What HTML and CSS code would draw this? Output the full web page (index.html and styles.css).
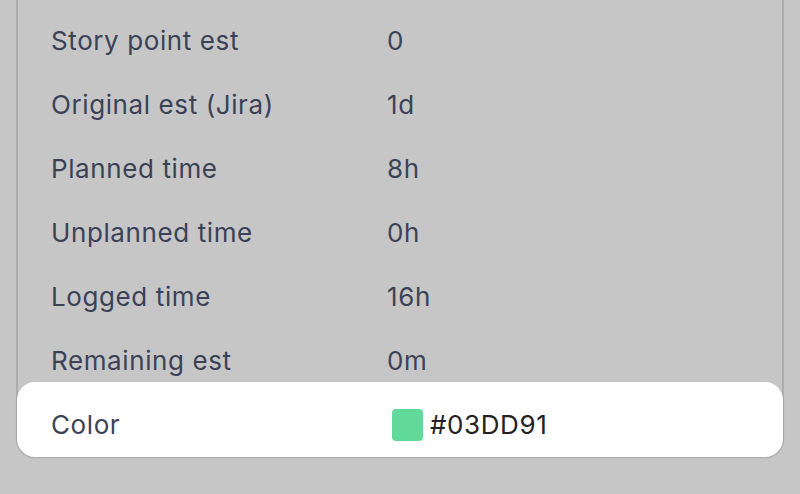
FILE: index.html
```html
<!DOCTYPE html>
<html lang="en">
<head>
    <meta charset="UTF-8">
    <meta name="viewport" content="width=device-width, initial-scale=1.0">
    <title>Issue details</title>
    <link rel="stylesheet" href="styles.css">
</head>
<body>
    <div class="details-panel">
        <div class="detail-row">
            <span class="detail-label">Story point est</span>
            <span class="detail-value">0</span>
        </div>
        <div class="detail-row">
            <span class="detail-label">Original est (Jira)</span>
            <span class="detail-value">1d</span>
        </div>
        <div class="detail-row">
            <span class="detail-label">Planned time</span>
            <span class="detail-value">8h</span>
        </div>
        <div class="detail-row">
            <span class="detail-label">Unplanned time</span>
            <span class="detail-value">0h</span>
        </div>
        <div class="detail-row">
            <span class="detail-label">Logged time</span>
            <span class="detail-value">16h</span>
        </div>
        <div class="detail-row">
            <span class="detail-label">Remaining est</span>
            <span class="detail-value">0m</span>
        </div>
        <div class="detail-row detail-row-active">
            <span class="detail-label">Color</span>
            <span class="detail-value color-value">
                <span class="color-swatch"></span>
                #03DD91
            </span>
        </div>
    </div>
</body>
</html>
```

FILE: styles.css
```css
body {
    background-color: #c6c6c6;
    color: #3b4257;
    font-family: Inter, "Noto Sans", sans-serif;
    margin: 0;
    height: 494px;
    overflow: hidden;
}
.details-panel {
    margin: 0 16px;
    padding-top: 9px;
    border: 2px solid #adadad;
    border-top: none;
    border-radius: 0 0 18px 18px;
}
.detail-row {
    display: flex;
    height: 64px;
    line-height: 64px;
    padding-left: 33px;
    font-size: 26px;
    letter-spacing: 0.6px;
}
.detail-label {
    width: 336px;
}
.detail-row-active {
    background-color: white;
    border-radius: 18px;
    margin: -11px -1px -2px -1px;
    padding-top: 11px;
    padding-left: 34px;
    box-shadow: 0 1px 2px rgba(0, 0, 0, 0.15);
}
.color-value {
    display: flex;
    align-items: center;
    gap: 7px;
    color: #222;
    margin-left: 5px;
}
.color-swatch {
    width: 31px;
    height: 32px;
    border-radius: 4px;
    background-color: #61d998;
}
```
